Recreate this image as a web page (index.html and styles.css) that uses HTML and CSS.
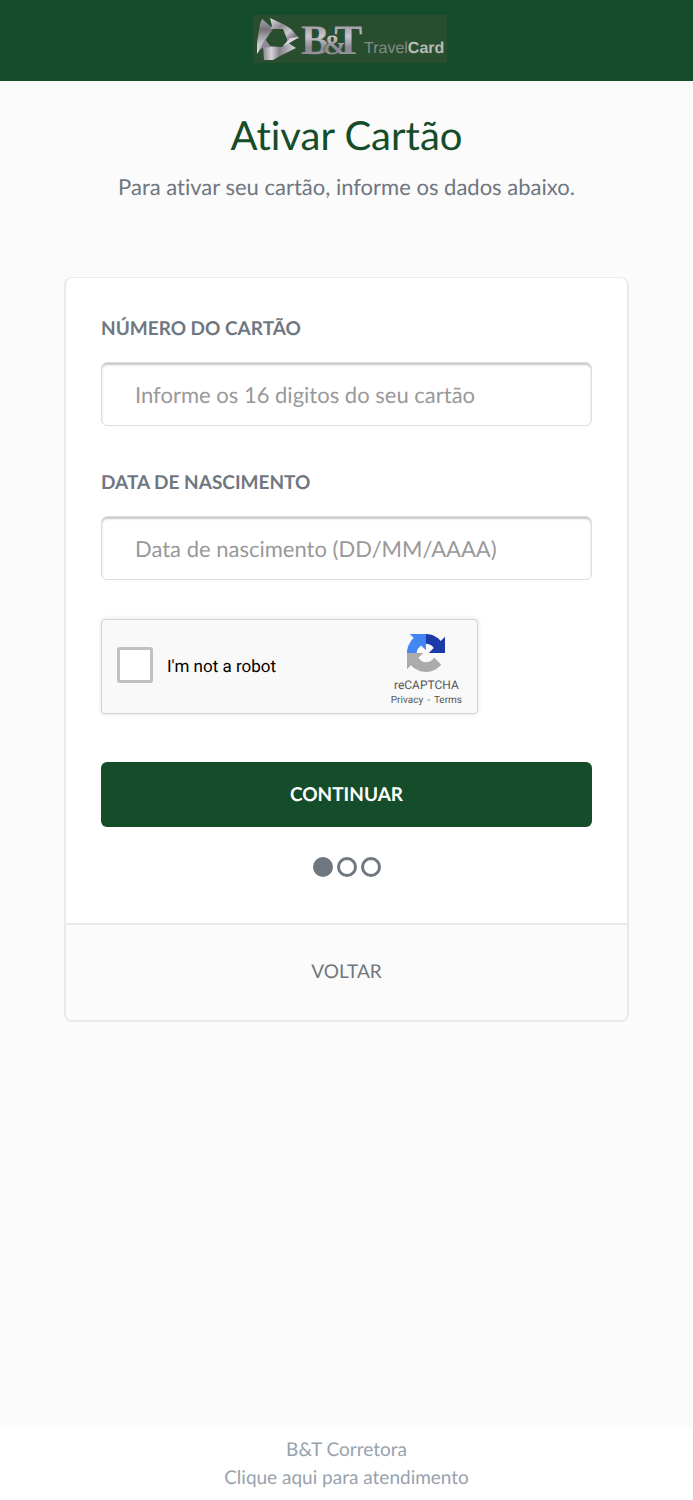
FILE: index.html
```html
<!DOCTYPE html>
<html lang="pt-BR">
<head>
<meta charset="utf-8">
<meta name="viewport" content="width=device-width, initial-scale=1">
<title>Ativar Cartão</title>
<link rel="stylesheet" href="styles.css">
</head>
<body>
<header class="topbar">
  <svg class="logo" viewBox="0 0 194 48" role="img" aria-label="B&amp;T TravelCard">
    <defs>
      <linearGradient id="metal" x1="0" y1="0" x2="0" y2="1">
        <stop offset="0" stop-color="#858089"/><stop offset=".4" stop-color="#c8c5cb"/><stop offset=".65" stop-color="#8b8790"/><stop offset="1" stop-color="#aaa6ae"/>
      </linearGradient>
      <linearGradient id="fold-a" x1="0" y1="0" x2="1" y2="1">
        <stop offset="0" stop-color="#e5e3e7"/><stop offset=".35" stop-color="#8e8a92"/><stop offset=".6" stop-color="#c9c7cc"/><stop offset=".8" stop-color="#77737b"/><stop offset="1" stop-color="#c9c7cc"/>
      </linearGradient>
      <linearGradient id="fold-b" x1="0" y1="0" x2="0" y2="1">
        <stop offset="0" stop-color="#a7a3ab"/><stop offset=".3" stop-color="#77737b"/><stop offset=".65" stop-color="#bdbac1"/><stop offset="1" stop-color="#e5e4e7"/>
      </linearGradient>
      <linearGradient id="fold-c" x1="0" y1="0" x2="1" y2="0">
        <stop offset="0" stop-color="#8b8790"/><stop offset=".25" stop-color="#d5d3d8"/><stop offset=".5" stop-color="#858189"/><stop offset="1" stop-color="#d9d7dc"/>
      </linearGradient>
    </defs>
    <rect width="194" height="48" fill="#294e2f"/>
    <path fill="url(#fold-b)" d="M9 4 16 10 20 14 13 24 8 33 4 39 4 28 7 9Z"/>
    <path fill="url(#fold-a)" d="M17 3 32 10 38 14 46 23 34 28 34 24 30 14 17 14 19 11Z"/>
    <path fill="url(#fold-c)" d="M10 31 29 32 34 27 43 33 27 41 20 45 11 45Z"/>
    <path fill="#d7d5da" d="M37 23 46 22 35 29 30 31Z"/>
    <path fill="#8f8b94" d="M12 24 18 32 10 33 6 35Z"/>
    <text class="logo-name" x="48" y="39" fill="url(#metal)">B<tspan class="logo-amp" dx="-6">&amp;</tspan><tspan dx="-12">T</tspan></text>
    <text class="logo-product" x="111" y="38">Travel<tspan class="logo-card">Card</tspan></text>
  </svg>
</header>

<main class="content">
  <h1 class="title">Ativar Cartão</h1>
  <p class="subtitle">Para ativar seu cartão, informe os dados abaixo.</p>

  <form class="card">
    <div class="card-body">
      <label class="label" for="card-number">NÚMERO DO CARTÃO</label>
      <input class="field" id="card-number" type="text" inputmode="numeric" placeholder="Informe os 16 digitos do seu cartão">
      <label class="label" for="birth-date">DATA DE NASCIMENTO</label>
      <input class="field" id="birth-date" type="text" placeholder="Data de nascimento (DD/MM/AAAA)">

      <div class="captcha">
        <input class="captcha-check" id="robot" type="checkbox">
        <label class="captcha-label" for="robot">I'm not a robot</label>
        <div class="captcha-brand">
          <svg class="captcha-logo" viewBox="0 0 64 64" aria-hidden="true">
            <path fill="#1c3aa9" d="M64 31.955l-.016-1.37V4.687l-7.16 7.16C50.965 4.674 42.033.093 32.03.093c-10.4 0-19.635 4.96-25.458 12.64l11.736 11.86a15.55 15.55 0 0 1 4.754-5.334c2.05-1.6 4.952-2.906 8.968-2.906.485 0 .86.057 1.135.163 4.976.393 9.288 3.14 11.828 7.124l-8.307 8.307L64 31.953"/>
            <path fill="#4285f4" d="M31.862.094l-1.37.016H4.594l7.16 7.16C4.58 13.147 0 22.08 0 32.046c0 10.4 4.96 19.635 12.64 25.458L24.5 45.768a15.55 15.55 0 0 1-5.334-4.754c-1.6-2.05-2.906-4.952-2.906-8.968 0-.485.057-.86.163-1.135.393-4.976 3.14-9.288 7.124-11.828l8.307 8.307L31.86.095"/>
            <path fill="#ababab" d="M.001 32.045l.016 1.37v25.898l7.16-7.16c5.873 7.173 14.806 11.754 24.81 11.754 10.4 0 19.635-4.96 25.458-12.64l-11.736-11.86a15.55 15.55 0 0 1-4.754 5.334c-2.05 1.6-4.952 2.906-8.968 2.906-.485 0-.86-.057-1.135-.163-4.976-.393-9.288-3.14-11.828-7.124l8.307-8.307c-10.522.04-22.4.066-27.295-.005"/>
          </svg>
          <span class="captcha-name">reCAPTCHA</span>
          <span class="captcha-links"><a href="#privacy">Privacy</a><span>-</span><a href="#terms">Terms</a></span>
        </div>
      </div>

      <button class="submit" type="submit">CONTINUAR</button>
      <div class="steps">
        <span class="step step-active"></span><span class="step"></span><span class="step"></span>
      </div>
    </div>
    <div class="card-footer"><a class="back" href="#voltar">VOLTAR</a></div>
  </form>
</main>

<footer class="footer">
  <span>B&amp;T Corretora</span>
  <a href="#atendimento">Clique aqui para atendimento</a>
</footer>
</body>
</html>
```
FILE: styles.css
```css
* { box-sizing: border-box; }

body {
  display: flex;
  flex-direction: column;
  min-height: 100vh;
  margin: 0;
  background: #fbfbfb;
  color: #6f7780;
  font-family: Lato, sans-serif;
  font-variant-ligatures: none;
  text-rendering: geometricPrecision;
}

a { color: inherit; text-decoration: none; }

.topbar {
  display: flex;
  justify-content: center;
  padding: 15px 0 18px 7px;
  background: #154c29;
}

.logo { display: block; width: 194px; height: 48px; }
.logo-name { font: bold 42px "Liberation Serif", serif; }
.logo-amp { font-size: 28px; stroke: #294e2f; stroke-width: 1px; paint-order: stroke; }
.logo-product { font: 16px "Liberation Sans", sans-serif; fill: #858a86; }
.logo-card { font-weight: bold; fill: #b6bab7; }

.content { flex: 1; padding: 32px 64px; }

.title {
  margin: 0;
  color: #154c29;
  font-size: 40px;
  font-weight: 400;
  line-height: 44px;
  text-align: center;
}

.subtitle {
  margin: 13px 0 73px;
  font-size: 22px;
  line-height: 34px;
  text-align: center;
}

.card {
  border: 2px solid #e9e9e9;
  border-top-width: 1px;
  border-radius: 8px;
  background: #fff;
}

.card-body { padding: 37px 35px 46px; }

.label {
  display: block;
  margin-bottom: 19px;
  font-size: 19px;
  font-weight: 700;
  line-height: 28px;
}

.field {
  display: block;
  width: 100%;
  height: 64px;
  margin-bottom: 43px;
  padding: 0 33px;
  border: 1px solid #dedede;
  border-radius: 6px;
  background: #fff;
  box-shadow: inset 0 2px 2px #c8c8c8;
  color: #6f7780;
  font: 22px Lato, sans-serif;
  font-variant-ligatures: none;
  text-rendering: inherit;
}

.field::placeholder { color: #999; opacity: 1; }

.captcha {
  display: flex;
  align-items: center;
  width: 377px;
  max-width: 100%;
  height: 95px;
  margin: -4px 0 48px;
  padding: 0 15px;
  border: 1px solid #d3d3d3;
  border-radius: 4px;
  background: #f9f9f9;
  box-shadow: 0 0 4px 1px rgba(0, 0, 0, .08);
  font-family: Roboto, sans-serif;
}

.captcha-check {
  width: 36px;
  height: 36px;
  margin: 0 0 4px;
  border: 3px solid #c1c1c1;
  border-radius: 3px;
  background: #fff;
  appearance: none;
}

.captcha-label {
  flex: 1;
  padding: 1px 0 0 14px;
  color: #000;
  font-size: 17px;
  line-height: 20px;
}

.captcha-brand {
  display: flex;
  flex-direction: column;
  align-items: center;
  padding-top: 8px;
  color: #555;
}

.captcha-logo { width: 38px; height: 38px; margin-bottom: 4px; }
.captcha-name { font-size: 12px; line-height: 18px; }
.captcha-links { display: flex; gap: 4px; font-size: 10px; line-height: 14px; }

.submit {
  display: block;
  width: 100%;
  height: 65px;
  border: 0;
  border-radius: 6px;
  background: #154c29;
  color: #fff;
  font: 700 19px Lato, sans-serif;
  text-rendering: inherit;
}

.steps {
  display: flex;
  justify-content: center;
  gap: 4px;
  margin-top: 30px;
}

.step {
  width: 20px;
  height: 20px;
  border: 3px solid #6f7780;
  border-radius: 50%;
}

.step-active { background: #6f7780; }

.card-footer {
  padding: 34px 0 35px;
  border-top: 2px solid #e9e9e9;
  border-radius: 0 0 6px 6px;
  background: #fbfbfb;
  font-size: 19px;
  line-height: 26px;
  text-align: center;
}

.footer {
  display: flex;
  flex-direction: column;
  align-items: center;
  padding: 8px 0;
  background: #fff;
  color: #98a2ae;
  font-size: 19px;
  line-height: 28px;
}
```
